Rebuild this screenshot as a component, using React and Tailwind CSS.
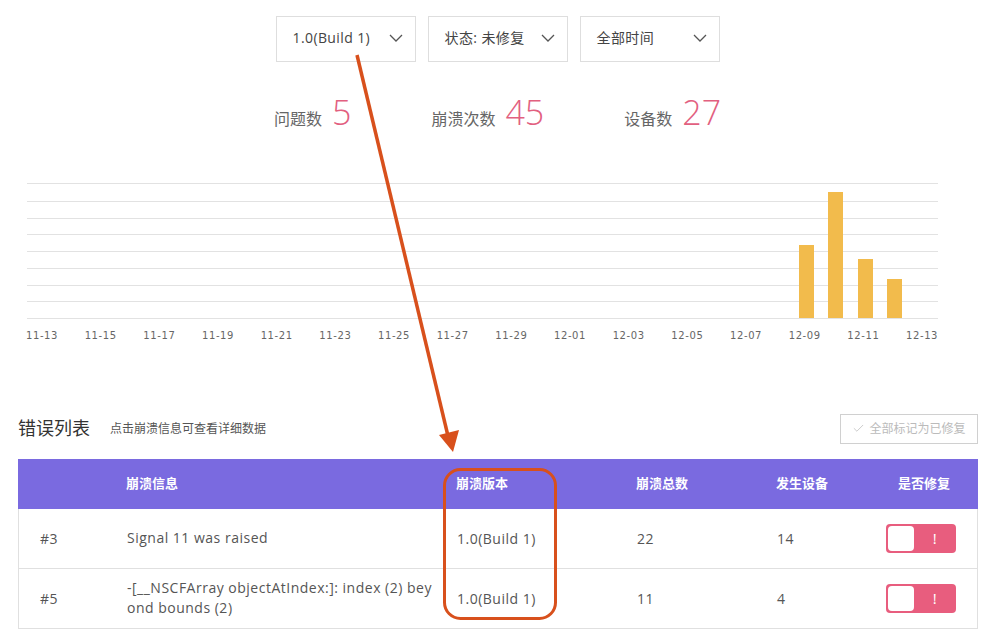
import { Check } from "lucide-react";

const FONT = "font-['Open_Sans','Noto_Sans_CJK_SC',sans-serif]";

const dropdowns = ["1.0(Build 1)", "状态: 未修复", "全部时间"];

const stats = [
  { label: "问题数", value: "5" },
  { label: "崩溃次数", value: "45" },
  { label: "设备数", value: "27" },
];

const gridY = [8, 26, 43, 59, 76, 93, 110, 126, 143];

const days = [
  "11-13", "11-15", "11-17", "11-19", "11-21", "11-23", "11-25", "11-27",
  "11-29", "12-01", "12-03", "12-05", "12-07", "12-09", "12-11", "12-13",
];

// x start, top (svg coords, bottom is 143)
const bars = [
  { x: 799, top: 70 },
  { x: 828, top: 17 },
  { x: 858, top: 84 },
  { x: 887, top: 104 },
];

const rows = [
  { id: "#3", info: ["Signal 11 was raised"], version: "1.0(Build 1)", total: "22", devices: "14" },
  {
    id: "#5",
    info: ["-[__NSCFArray objectAtIndex:]: index (2) bey", "ond bounds (2)"],
    version: "1.0(Build 1)",
    total: "11",
    devices: "4",
  },
];

function Chevron() {
  return (
    <svg width="14" height="8" viewBox="0 0 14 8" className="text-[#555]">
      <polyline points="1,1 7,7 13,1" fill="none" stroke="currentColor" strokeWidth="1.3" />
    </svg>
  );
}

function Toggle() {
  return (
    <div className="relative w-[70px] h-[29px] rounded-[4px] bg-[#e85d7e]">
      <div className="absolute left-[2px] top-[2px] w-[26px] h-[25px] rounded-[4px] bg-white" />
      <span className="absolute left-[28px] right-0 top-0 bottom-0 flex items-center justify-center text-white text-[15px]">
        !
      </span>
    </div>
  );
}

export default function App() {
  return (
    <div className={`relative w-[998px] h-[632px] overflow-hidden bg-white ${FONT}`}>
      {/* filters */}
      <div className="flex justify-center gap-3 pt-4 pr-[3px]">
        {dropdowns.map((d) => (
          <div
            key={d}
            className="w-[140px] h-[46px] border border-[#dedede] flex items-center justify-between pl-4 pr-3 pb-[3px] text-[14px] tracking-[0.4px] text-[#444]"
          >
            <span>{d}</span>
            <Chevron />
          </div>
        ))}
      </div>

      {/* stats */}
      <div className="flex justify-center items-baseline gap-[80px] pt-[30px] h-[70px] pr-[3px]">
        {stats.map((s) => (
          <div key={s.label} className="flex items-baseline gap-[10px]">
            <span className="text-[16px] text-[#666]">{s.label}</span>
            <span className="text-[34px] leading-[40px] font-light text-[#e2607f]">{s.value}</span>
          </div>
        ))}
      </div>

      {/* chart */}
      <svg className="block mt-[43px]" width="998" height="170">
        {gridY.map((y) => (
          <line key={y} x1="27" x2="938" y1={y + 0.5} y2={y + 0.5} stroke="#e2e2e2" strokeWidth="1" />
        ))}
        {bars.map((b) => (
          <rect key={b.x} x={b.x} y={b.top} width="15" height={143 - b.top} fill="#f2bb4c" />
        ))}
        {days.map((d, i) => (
          <text
            key={d}
            x={42 + i * 58.67}
            y="164"
            textAnchor="middle"
            fontSize="10"
            letterSpacing="0.6"
            fill="#666"
            fontFamily="DejaVu Sans, sans-serif"
          >
            {d}
          </text>
        ))}
      </svg>

      {/* list header */}
      <div className="flex items-center justify-between mt-[69px] ml-[18px] w-[960px] h-[29px]">
        <div className="flex items-center gap-5">
          <span className="text-[18px] text-[#333]">错误列表</span>
          <span className="text-[12px] text-[#555]">点击崩溃信息可查看详细数据</span>
        </div>
        <div className="w-[138px] h-[30px] border border-[#d0d0d0] flex items-center justify-center gap-1 text-[12px] text-[#bbb]">
          <Check size={13} strokeWidth={1.4} />
          <span>全部标记为已修复</span>
        </div>
      </div>

      {/* table */}
      <div className="ml-[18px] w-[960px] mt-4">
        <div className="grid grid-cols-[108px_330px_180px_140px_110px_92px] h-[50px] items-center bg-[#7a6ae0] text-white text-[13px] font-bold">
          <div />
          <div>崩溃信息</div>
          <div>崩溃版本</div>
          <div>崩溃总数</div>
          <div>发生设备</div>
          <div className="pl-3">是否修复</div>
        </div>
        {rows.map((r) => (
          <div
            key={r.id}
            className="grid grid-cols-[108px_330px_180px_140px_110px_92px] h-[60px] items-center border-x border-b border-[#e0e0e0] text-[14px] tracking-[0.5px] text-[#555]"
          >
            <div className="pl-[21px]">{r.id}</div>
            <div className="leading-[20px] -mt-px">
              {r.info.map((line) => (
                <div key={line}>{line}</div>
              ))}
            </div>
            <div>{r.version}</div>
            <div>{r.total}</div>
            <div>{r.devices}</div>
            <div className="-ml-px">
              <Toggle />
            </div>
          </div>
        ))}
      </div>

      {/* annotation overlay */}
      <svg className="absolute left-0 top-0 pointer-events-none" width="998" height="632">
        <line x1="357" y1="55" x2="448" y2="436" stroke="#d8501c" strokeWidth="3.5" />
        <polygon points="453,452 439,435 459,430" fill="#d8501c" />
        <rect x="444.5" y="469.5" width="111" height="149" rx="16" fill="none" stroke="#d8501c" strokeWidth="3" />
      </svg>
    </div>
  );
}
